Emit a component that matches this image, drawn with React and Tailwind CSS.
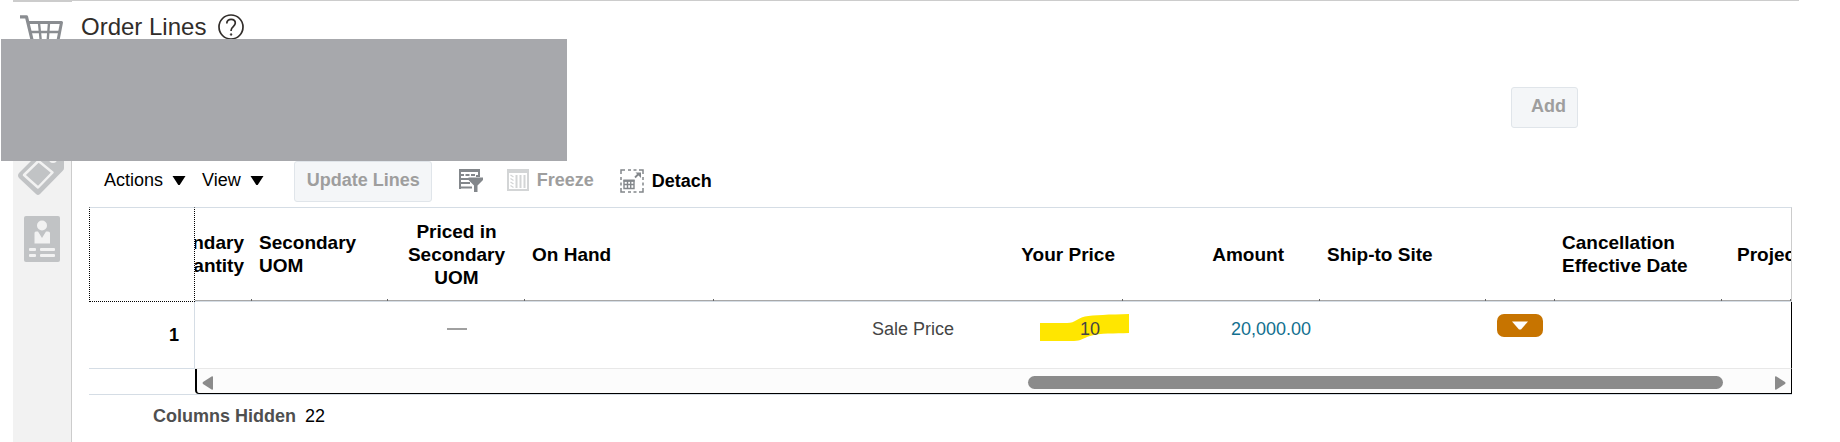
import React from "react";

const columns = [
  { id: "qty", width: "w-[57px]", head: ["Secondary", "Quantity"], align: "end", pad: "pr-2" },
  { id: "uom", width: "w-[136px]", head: ["Secondary", "UOM"], align: "start", pad: "pl-[7px]" },
  { id: "priced", width: "w-[137px]", head: ["Priced in", "Secondary", "UOM"], align: "center", pad: "" },
  { id: "onhand", width: "w-[189px]", head: ["On Hand"], align: "start", pad: "pl-[7px]" },
  { id: "price", width: "w-[409px]", head: ["Your Price"], align: "end", pad: "pr-2" },
  { id: "amount", width: "w-[197px]", head: ["Amount"], align: "end", pad: "pr-9" },
  { id: "site", width: "w-[166px]", head: ["Ship-to Site"], align: "start", pad: "pl-[7px]" },
  { id: "menu", width: "w-[69px]", head: [], align: "start", pad: "" },
  { id: "cancel", width: "w-[167px]", head: ["Cancellation", "Effective Date"], align: "start", pad: "pl-[7px]" },
  { id: "project", width: "w-auto", head: ["Project"], align: "start", pad: "pl-[15px]" },
];

const justify = {
  start: "justify-start text-left",
  center: "justify-center text-center",
  end: "justify-end text-right",
};

function CartIcon() {
  return (
    <svg width="44" height="36" viewBox="0 0 44 36" fill="none" stroke="#8a8d91" aria-hidden="true">
      <path d="M0 1.800h6.500L14 33" strokeWidth="3.200" strokeLinejoin="round" />
      <path d="M8 7.500H41.500L37.500 28H13" strokeWidth="3" strokeLinejoin="round" />
      <path d="M10 17H40M19 8l2 20M29 8l-1.500 20" strokeWidth="2.400" />
    </svg>
  );
}

function TagIcon() {
  return (
    <svg width="48" height="52" viewBox="0 0 48 52" aria-hidden="true">
      <path d="M2 29 26 5q2-2 5-2h12q4 0 4 4v17q0 1.500-1 2.500L23 50q-2 2-4 0L2 34q-2-2.500 0-5z" fill="#c1c3c5" />
      <path d="M21.500 17 35.500 28.500 21 43.500 7 31z" fill="none" stroke="#f2f2f2" strokeWidth="2.500" strokeLinejoin="round" />
      <circle cx="36" cy="15" r="4" fill="#f2f2f2" />
    </svg>
  );
}

function BadgeIcon() {
  return (
    <svg width="36" height="46" viewBox="0 0 36 46" aria-hidden="true">
      <rect width="36" height="46" rx="2" fill="#c1c3c5" />
      <g fill="#f2f2f2">
        <circle cx="18" cy="9.500" r="5" />
        <path d="M10.500 17q0-1.500 1.500-1.500h2L18 22l4-6.500h2q2 0 2 1.500v10.500H10.500z" />
        <rect x="5" y="32" width="7" height="3" rx="1" />
        <rect x="16" y="32" width="15" height="3" rx="1" />
        <rect x="5" y="38" width="7" height="3" rx="1" />
        <rect x="16" y="38" width="15" height="3" rx="1" />
      </g>
    </svg>
  );
}

function HelpIcon() {
  return (
    <svg width="26" height="26" viewBox="0 0 26 26" fill="none" stroke="#312d2a" aria-hidden="true">
      <circle cx="13" cy="13" r="12" strokeWidth="1.700" />
      <path d="M8.800 9.500c0-2.600 1.800-4.200 4.300-4.200s4.200 1.500 4.200 3.800c0 3.400-4.200 3.500-4.200 7.200v.700" strokeWidth="1.700" />
      <circle cx="13.100" cy="20.500" r=".900" fill="#312d2a" strokeWidth=".500" />
    </svg>
  );
}

function Caret() {
  return (
    <svg width="14" height="10" viewBox="0 0 14 10" aria-hidden="true">
      <path d="M.500 1h13L7.700 10H6.300z" fill="#000" />
    </svg>
  );
}

function FilterIcon() {
  return (
    <svg width="24" height="24" viewBox="0 0 24 24" aria-hidden="true">
      <path d="M0 0h21v3H0zM0 0h2v20H0z" fill="#83878b" />
      <path d="M2 6h3M6.500 6h4M12 6h4M20 2v5h-3M2 10h8M2 14h9M0 18.500h13" stroke="#83878b" strokeWidth="2" fill="none" />
      <path d="M9.500 8.500H24v2.500l-5.500 5.500V23H15v-6.500L9.500 11z" fill="#83878b" />
    </svg>
  );
}

function FreezeIcon() {
  return (
    <svg width="22" height="22" viewBox="0 0 22 22" fill="none" stroke="#d3d5d6" aria-hidden="true">
      <rect x="1" y="1" width="20" height="20" strokeWidth="2" />
      <path d="M1 3h20" strokeWidth="2" />
      <path d="M9.500 6v13M13.500 6v13M17.500 6v13" strokeWidth="2" />
      <path d="M3.500 6l3 2M3.500 9.500l3 2M3.500 13l3 2M3.500 16.500l3 2" strokeWidth="1.300" />
    </svg>
  );
}

function DetachIcon() {
  return (
    <svg width="24" height="24" viewBox="0 0 24 24" fill="none" stroke="#83878b" aria-hidden="true">
      <path d="M1 5V1h4M8 1h3M13.500 1h3M19 1h4v4M23 8v3M23 13.500v3M23 19v4h-4M16.500 23h-3M11 23H8M5 23H1v-4M1 16.500v-3M1 11V8" strokeWidth="1.500" />
      <path d="M4 12h10v7.500H4zM4 15.500h10M7.500 12v7.500M10.700 12v7.500" strokeWidth="1.400" />
      <path d="M3.300 11.500h11.400" strokeWidth="2" />
      <path d="M15 8.500l4-4" strokeWidth="1.800" />
      <path d="M15.500 3.500H21V9z" fill="#83878b" stroke="none" />
    </svg>
  );
}

function PriceValue() {
  return (
    <div className="relative flex justify-end pr-[23px]">
      <svg className="absolute -top-[6px] right-[-7px]" width="90" height="28" viewBox="0 0 90 28" aria-hidden="true">
        <path d="M0 10h27c9 0 10-5 18-6.500S70 1.500 89 1v19c-14 .500-29 0-39 3-7 2-9 5-16 5H0z" fill="#ffe600" />
      </svg>
      <span className="relative">10</span>
    </div>
  );
}

function cellContent(id) {
  switch (id) {
    case "priced":
      return (
        <div className="flex h-5 items-center justify-center">
          <span className="h-0.5 w-5 bg-[#a0a0a0]" />
        </div>
      );
    case "price":
      return (
        <div className="flex justify-end">
          <span className="pr-[126px]">Sale Price</span>
          <PriceValue />
        </div>
      );
    case "amount":
      return (
        <a href="#amount" className="block pr-[9px] text-right text-[#12708f]">
          20,000.00
        </a>
      );
    case "menu":
      return (
        <button type="button" aria-label="Line actions" className="ml-[11px] flex h-[23px] w-[46px] items-center justify-center rounded-[7px] bg-[#c77400]">
          <svg width="16" height="9" viewBox="0 0 16 9" aria-hidden="true">
            <path d="M0 .500h16L9 8.500H7z" fill="#fff" />
          </svg>
        </button>
      );
    default:
      return null;
  }
}

export default function App() {
  return (
    <div className="relative flex min-h-screen bg-white pl-[13px] font-['Liberation_Sans',Arial,sans-serif] text-[18px] leading-5 text-black">
      <nav aria-label="Sections" className="flex w-[59px] shrink-0 flex-col border-t-2 border-[#ccc]">
        <a href="#lines" aria-label="Order lines" className="h-[108px] bg-white pt-[13px] pl-[7px]">
          <CartIcon />
        </a>
        <div className="flex flex-1 flex-col border-r border-[#ccc] bg-[#f2f2f2]">
          <a href="#pricing" aria-label="Pricing" className="pt-[34px] pl-1">
            <TagIcon />
          </a>
          <a href="#contacts" aria-label="Contacts" className="pt-5 pl-[11px]">
            <BadgeIcon />
          </a>
        </div>
      </nav>

      <main className="mr-[41px] flex min-w-0 flex-1 flex-col border-t border-[#ccc]">
        <header className="flex h-[52px] items-center gap-3 pl-[9px]">
          <h1 className="text-[24px] leading-7 text-[#312d2a]">Order Lines</h1>
          <button type="button" aria-label="Help">
            <HelpIcon />
          </button>
        </header>

        <div className="flex h-[108px] justify-end pt-[34px] pr-[221px]">
          <button type="button" disabled className="flex h-[41px] items-start rounded-[3px] border border-[#e0e5ea] bg-[#f4f6f8] pt-2 pr-[11px] pl-[19px] font-bold text-[#9e9e9e]">
            Add
          </button>
        </div>

        <div role="toolbar" aria-label="Line tools" className="flex h-[41px] items-start pl-8">
          <button type="button" className="mt-[9px] flex items-center gap-[9px]">
            Actions <Caret />
          </button>
          <button type="button" className="mt-[9px] ml-4 flex items-center gap-[9px]">
            View <Caret />
          </button>
          <button type="button" disabled className="ml-[30px] flex h-[41px] items-start rounded-[3px] border border-[#e0e5ea] bg-[#f4f6f8] pt-2 pr-[11px] pl-3 font-bold text-[#9e9e9e]">
            Update Lines
          </button>
          <button type="button" aria-label="Query by example" className="mt-2 ml-[27px]">
            <FilterIcon />
          </button>
          <button type="button" disabled className="mt-2 ml-6 flex items-center gap-2 font-bold text-[#9e9e9e]">
            <FreezeIcon /> Freeze
          </button>
          <button type="button" className="mt-2 ml-[26px] flex items-center gap-2 font-bold">
            <DetachIcon /> Detach
          </button>
        </div>

        <section aria-label="Order lines table" className="mt-[5px] mr-[7px] ml-[17px] flex border-b border-[#d5dde5]">
          <table className="w-[106px] shrink-0 table-fixed border-separate border-spacing-0 self-start">
            <thead>
              <tr>
                <th aria-label="Line" className="h-[95px] border border-dotted border-t-[#d5dde5] border-black [border-top-style:solid] p-0" />
              </tr>
            </thead>
            <tbody>
              <tr>
                <th scope="row" className="h-[67px] border-r border-b border-[#d5dde5] p-0 pr-[15px] text-right align-top">
                  <div className="pt-[23px]">1</div>
                </th>
              </tr>
            </tbody>
          </table>

          <div className="min-w-0 flex-1">
            <div className="overflow-hidden">
              <table className="w-full table-fixed border-separate border-spacing-0">
                <colgroup>
                  {columns.map((c) => (
                    <col key={c.id} className={c.width} />
                  ))}
                </colgroup>
                <thead>
                  <tr>
                    {columns.map((c) => (
                      <th
                        key={c.id}
                        scope="col"
                        className="relative h-[95px] overflow-hidden border-t border-b border-[#d5dde5] p-0 text-[19px] leading-[23px] last:border-r last:border-r-[#ccc]"
                      >
                        <div className={`flex h-[93px] items-center whitespace-nowrap border-b border-[#a8a8a8] ${c.pad} ${justify[c.align]}`}>
                          <div>
                            {c.head.map((line) => (
                              <div key={line}>{line}</div>
                            ))}
                          </div>
                        </div>
                        <span className="absolute right-0 bottom-0 h-0.5 w-px bg-[#666]" />
                      </th>
                    ))}
                  </tr>
                </thead>
                <tbody>
                  <tr>
                    {columns.map((c) => (
                      <td key={c.id} className="h-[67px] border-b border-[#e8e8e8] p-0 align-top text-[#454545] last:border-r last:border-r-black">
                        <div className={c.id === "menu" ? "pt-3" : "pt-[17px]"}>{cellContent(c.id)}</div>
                      </td>
                    ))}
                  </tr>
                </tbody>
              </table>
            </div>
            <div className="flex h-[25px] items-center rounded-bl-[4px] border-r border-b border-l-2 border-black bg-[#fcfcfc] pt-[3px] pr-[5px] pl-[5px]">
              <svg width="11" height="14" viewBox="0 0 11 14" aria-hidden="true">
                <path d="M11 1v12q0 1-1 .800L1 8Q0 7 1 6L10 .200Q11 0 11 1z" fill="#8b8b8b" />
              </svg>
              <div className="flex flex-1 justify-end pr-[52px]">
                <div className="h-[13px] w-[46%] rounded-full bg-[#8b8b8b]" />
              </div>
              <svg width="11" height="14" viewBox="0 0 11 14" aria-hidden="true">
                <path d="M0 1v12q0 1 1 .800L10 8q1-1 0-2L1 .200Q0 0 0 1z" fill="#8b8b8b" />
              </svg>
            </div>
          </div>
        </section>

        <footer className="flex gap-[9px] pt-[11px] pl-[81px]">
          <span className="font-bold text-[#4f4f4f]">Columns Hidden</span>
          <span>22</span>
        </footer>
      </main>

      <div className="absolute top-[39px] left-px h-[122px] w-[566px] bg-[#a7a8ac]" />
    </div>
  );
}
